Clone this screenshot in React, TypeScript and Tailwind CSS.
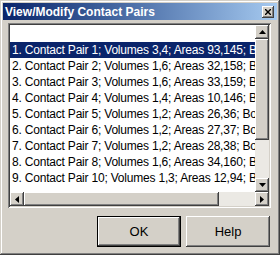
const ROWS = [
  "1. Contact Pair 1; Volumes 3,4; Areas 93,145; Border",
  "2. Contact Pair 2; Volumes 1,6; Areas 32,158; Border",
  "3. Contact Pair 3; Volumes 1,6; Areas 33,159; Border",
  "4. Contact Pair 4; Volumes 1,4; Areas 10,146; Border",
  "5. Contact Pair 5; Volumes 1,2; Areas 26,36; Border",
  "6. Contact Pair 6; Volumes 1,2; Areas 27,37; Border",
  "7. Contact Pair 7; Volumes 1,2; Areas 28,38; Border",
  "8. Contact Pair 8; Volumes 1,6; Areas 34,160; Border",
  "9. Contact Pair 10; Volumes 1,3; Areas 12,94; Border",
];

const raised =
  "bg-[#d4d0c8] shadow-[inset_-1px_-1px_#404040,inset_1px_1px_#ffffff,inset_-2px_-2px_#808080,inset_2px_2px_#d4d0c8]";

function Arrow({ dir }: { dir: "up" | "down" | "left" | "right" }) {
  const pts = {
    up: "3.5,0 7,4 0,4",
    down: "0,0 7,0 3.5,4",
    left: "4,0 4,7 0,3.5",
    right: "0,0 0,7 4,3.5",
  }[dir];
  const vert = dir === "up" || dir === "down";
  return (
    <svg width={vert ? 7 : 4} height={vert ? 4 : 7} viewBox={vert ? "0 0 7 4" : "0 0 4 7"}>
      <polygon points={pts} fill="#000" />
    </svg>
  );
}

function ScrollBtn({ dir }: { dir: "up" | "down" | "left" | "right" }) {
  return (
    <div className={`${raised} w-[14px] h-[14px] shrink-0 flex items-center justify-center`}>
      <Arrow dir={dir} />
    </div>
  );
}

export default function App() {
  return (
    <div
      className="w-[280px] h-[255px] bg-[#d4d0c8] p-[3px] flex flex-col shadow-[inset_-1px_-1px_#404040,inset_1px_1px_#d4d0c8,inset_-2px_-2px_#808080,inset_2px_2px_#ffffff]"
      style={{ fontFamily: '"Liberation Sans", Arial, sans-serif' }}
    >
      {/* Title bar */}
      <div className="h-[17px] flex items-center justify-between pl-[2px] pr-[3px] bg-linear-to-r from-[#0a246a] to-[#a6caf0]">
        <span className="text-white font-bold text-[12px] leading-none">View/Modify Contact Pairs</span>
        <div className={`${raised} w-[12px] h-[12px] flex items-center justify-center`}>
          <svg width="6" height="6" viewBox="0 0 6 6">
            <path d="M0 0L6 6M6 0L0 6" stroke="#000" strokeWidth="1.4" />
          </svg>
        </div>
      </div>

      {/* List box */}
      <div className="mt-[3px] ml-[5px] mr-[6px] h-[185px] flex flex-col p-[2px] bg-white shadow-[inset_1px_1px_#808080,inset_-1px_-1px_#ffffff,inset_2px_2px_#404040,inset_-2px_-2px_#d4d0c8]">
        <div className="flex flex-1 min-h-0">
          <div className="flex-1 min-w-0 overflow-hidden text-[12px] tracking-[-0.2px] leading-[16px] text-black">
            <div className="h-[17px]" />
            {ROWS.map((r, i) => (
              <div
                key={i}
                className={`h-[16px] pl-[2px] whitespace-pre ${i === 0 ? "bg-[#0a246a] text-white" : ""}`}
              >
                {r}
              </div>
            ))}
          </div>
          <div className="w-[14px] flex flex-col">
            <ScrollBtn dir="up" />
            <div className={`${raised} h-[101px]`} />
            <div className="flex-1 bg-[#ebe9e4]" />
            <ScrollBtn dir="down" />
          </div>
        </div>
        <div className="h-[14px] flex">
          <ScrollBtn dir="left" />
          <div className={`${raised} w-[195px]`} />
          <div className="flex-1 bg-[#ebe9e4]" />
          <ScrollBtn dir="right" />
        </div>
      </div>

      {/* Buttons */}
      <div className="mt-[8px] flex justify-end gap-[5px] pr-[7px]">
        <button className="w-[84px] h-[31px] border border-black bg-[#d4d0c8] p-0">
          <div className={`${raised} w-full h-full flex items-center justify-center text-[13px] text-black`}>
            OK
          </div>
        </button>
        <button className={`${raised} w-[84px] h-[31px] flex items-center justify-center text-[13px] text-black`}>
          Help
        </button>
      </div>
    </div>
  );
}
